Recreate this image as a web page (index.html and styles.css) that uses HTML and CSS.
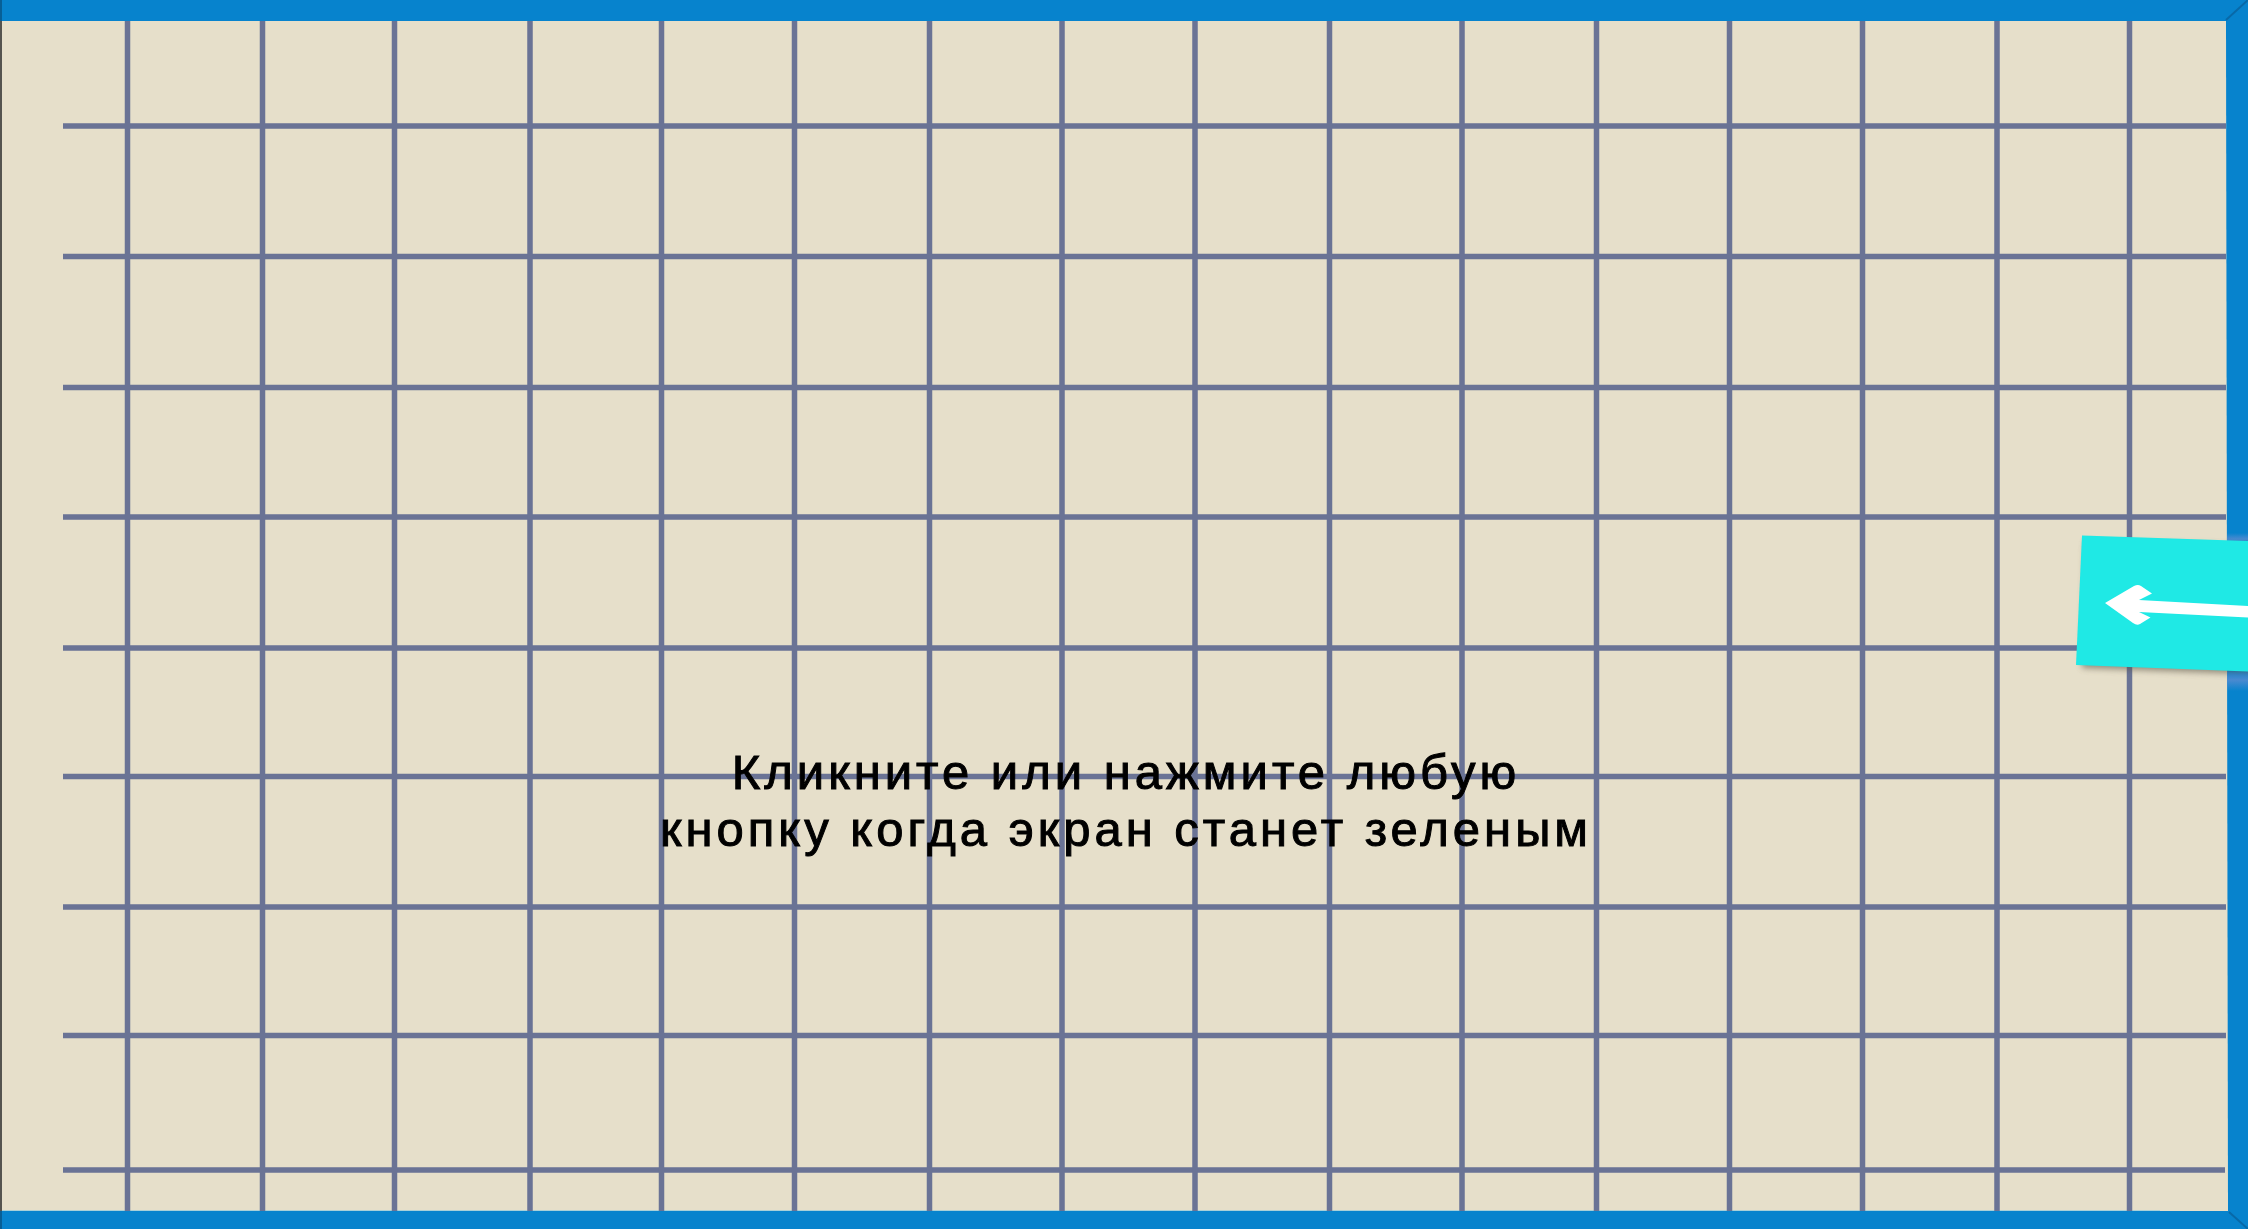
FILE: index.html
```html
<!DOCTYPE html>
<html lang="ru">
<head>
<meta charset="utf-8">
<meta name="viewport" content="width=device-width, initial-scale=1">
<title>Тест на реакцию</title>
<link rel="stylesheet" href="styles.css">
</head>
<body>
<main class="stage">
  <svg class="board" viewBox="0 0 2248 1229" preserveAspectRatio="none" aria-hidden="true">
    <rect width="2248" height="1229" fill="#0783cd"/>
    <path d="M2226 20L2248 0M2229 1212L2248 1229" stroke="#0869a8" stroke-width="2"/>
    <path d="M1 0V1229" stroke="#075f96" stroke-width="2"/>
    <rect x="2" y="21" width="2224" height="1190" fill="#e6dfca"/>
    <path d="M2226 21L2228 1211H2226Z" fill="#e6dfca"/>
    <path d="M2 1210.500H2160" stroke="#a9d0d8" stroke-width="1"/>
    <path d="M1 21V1211" stroke="#55544f" stroke-width="2"/>
    <path d="M63 126H2226M63 256.500H2226M63 387.500H2226M63 517H2226M63 648H2226M63 776.500H2226M63 907H2226M63 1035.500H2226M63 1170H2225" stroke="#6a7395" stroke-width="5.500"/>
    <path d="M127.500 21V1211M262.500 21V1211M394.500 21V1211M530 21V1211M661.500 21V1211M794.500 21V1211M929.500 21V1211M1062 21V1211M1195 21V1211M1329.500 21V1211M1462 21V1211M1596.500 21V1211M1729.500 21V1211M1862.500 21V1211M1997 21V1211M2129.500 21V1211" stroke="#6a7395" stroke-width="5.500"/>
  </svg>
  <h1 class="prompt">Кликните или нажмите любую<br>кнопку когда экран станет зеленым</h1>
  <button class="back" type="button" aria-label="Назад">
    <svg viewBox="0 0 208 210" aria-hidden="true">
      <defs>
        <filter id="soft" x="-20%" y="-20%" width="140%" height="150%"><feGaussianBlur stdDeviation="3"/></filter>
        <linearGradient id="streak" x1="0" y1="0" x2="0" y2="1">
          <stop offset="0" stop-color="#4a8ad0" stop-opacity="0"/>
          <stop offset=".5" stop-color="#4a8ad0"/>
          <stop offset="1" stop-color="#4a8ad0" stop-opacity="0"/>
        </linearGradient>
      </defs>
      <rect x="187" y="33" width="21" height="12" fill="url(#streak)"/>
      <path d="M45 42L230 46V175L42 168Z" fill="#5b5446" opacity=".6" filter="url(#soft)"/>
      <rect x="187" y="169" width="21" height="22" fill="url(#streak)"/>
      <path d="M42 35.500L208 41V171.500L36 165Z" fill="#1fe9e5"/>
      <path d="M65 103L94 86Q98 84 101 86L112 93.500L99 100L208 106V117.500L99 112L110.500 117.500L100 124Q97 126 93 123Z" fill="#fff"/>
    </svg>
  </button>
</main>
</body>
</html>
```
FILE: styles.css
```css
* {
  box-sizing: border-box;
}

body {
  margin: 0;
  background: #0783cd;
  font-family: "Liberation Sans", Arial, sans-serif;
}

.stage {
  position: relative;
  display: grid;
  grid-template-rows: 121fr 79fr;
  justify-items: center;
  min-height: 100vh;
  overflow: hidden;
}

.board {
  position: absolute;
  inset: 0;
  width: 100%;
  height: 100%;
}

.prompt {
  position: relative;
  grid-row: 2;
  margin: 0;
  padding-left: 4px;
  color: #000;
  font-size: 49px;
  font-weight: 400;
  line-height: 57px;
  letter-spacing: 4px;
  text-align: center;
  -webkit-text-stroke: 1px #000;
}

.back {
  position: absolute;
  top: 500px;
  right: 0;
  width: 208px;
  height: 210px;
  padding: 0;
  border: 0;
  background: none;
  cursor: pointer;
}

.back svg {
  display: block;
  width: 100%;
  height: 100%;
}
```
